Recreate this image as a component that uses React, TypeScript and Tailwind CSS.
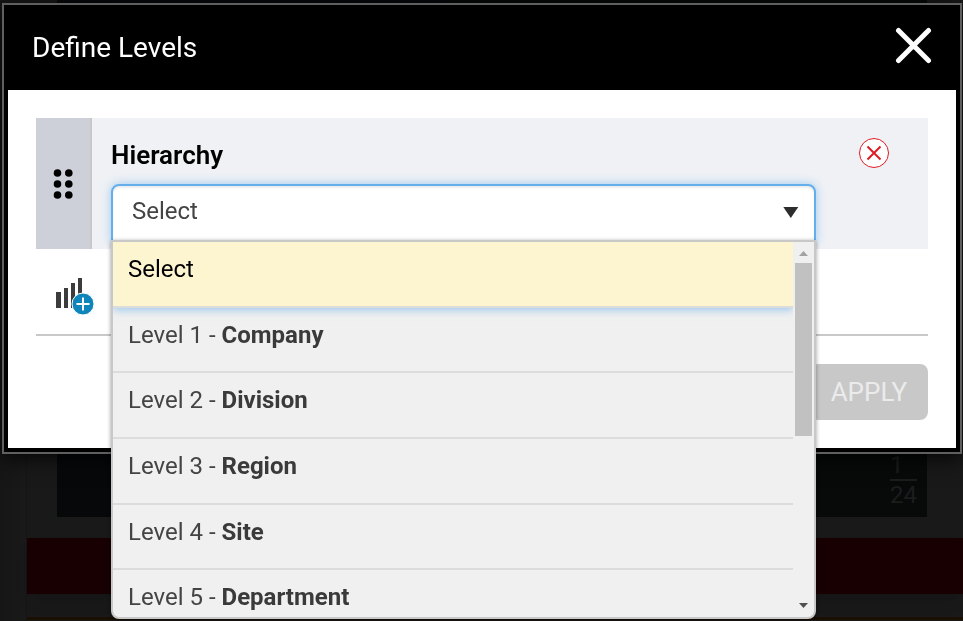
import React, { useState } from 'react';

const LEVELS = [
  { id: '1', name: 'Company' },
  { id: '2', name: 'Division' },
  { id: '3', name: 'Region' },
  { id: '4', name: 'Site' },
  { id: '5', name: 'Department' },
];

// Dimmed page that sits behind the dialog
function PageBehind() {
  return (
    <div aria-hidden="true" className="fixed inset-0 flex overflow-hidden bg-[#191919]">
      <div className="w-[27px] shrink-0 border-r border-[#151515] bg-linear-to-r from-[#161616] to-[#191919]" />
      <div className="flex min-w-0 flex-1 flex-col">
        <div className="mr-9 ml-[30px] flex h-[517px] shrink-0 flex-col items-end justify-end bg-linear-to-r from-[#06080a] to-[#070a09] pr-2.5 pb-2 text-2xl leading-7 text-[#1b1d1d]">
          <span className="w-[27px] border-b-2 border-[#1b1d1d]">1</span>
          <span className="w-[27px]">24</span>
        </div>
        <div className="mt-[21px] h-14 shrink-0 bg-[#180002] shadow-lg" />
        <div className="mt-[23px] h-[3px] bg-[#1a0f00]" />
      </div>
    </div>
  );
}

function DragHandle() {
  return (
    <button type="button" aria-label="Reorder level" className="flex w-14 shrink-0 items-center justify-center border-r-2 border-[#c8c8c8] bg-[#cdd0d9]">
      <svg width="20" height="32" viewBox="0 0 20 32" fill="#000">
        {[5, 16, 27].map((y) => (
          <React.Fragment key={y}>
            <circle cx="4.5" cy={y} r="3.8" />
            <circle cx="15.8" cy={y} r="3.8" />
          </React.Fragment>
        ))}
      </svg>
    </button>
  );
}

function AddLevelIcon() {
  return (
    <svg width="40" height="40" viewBox="0 0 40 40">
      <g fill="#3c3c3c">
        <rect x="0" y="15" width="5" height="16" />
        <rect x="8" y="11" width="4" height="20" />
        <rect x="15" y="6" width="4" height="25" />
        <rect x="22" y="1" width="4" height="30" />
      </g>
      <circle cx="27" cy="27" r="11" fill="#0e86bb" stroke="#fff" strokeWidth="1" />
      <path d="M27 20.5v13M20.5 27h13" stroke="#fff" strokeWidth="2" fill="none" />
    </svg>
  );
}

type MenuProps = {
  value: string;
  onPick: (value: string) => void;
};

function LevelMenu({ value, onPick }: MenuProps) {
  const row = 'cursor-pointer border-b-2 border-[#dcdcdc] px-[15px] pt-[9px]';
  const active = 'relative bg-[#fdf4d0] text-black shadow-[0_2px_8px_rgba(100,175,235,0.6)]';

  return (
    <div className="absolute inset-x-0 top-14 z-10 flex h-[379px] overflow-hidden rounded-b-lg border-2 border-[#c8c8c8] bg-[#f0f0f0] shadow-[0_1px_4px_rgba(0,0,0,0.4)]">
      <ul role="listbox" aria-label="Hierarchy levels" className="grid h-[394px] flex-1 grid-rows-6 overflow-hidden text-2xl leading-9 text-[#444]">
        <li role="option" aria-selected={value === ''} onClick={() => onPick('')} className={`${row} ${value === '' ? active : ''}`}>
          Select
        </li>
        {LEVELS.map((level) => (
          <li
            key={level.id}
            role="option"
            aria-selected={value === level.id}
            onClick={() => onPick(level.id)}
            className={`${row} ${value === level.id ? active : ''}`}
          >
            Level {level.id} - <b className="font-bold text-[#3a3a3a]">{level.name}</b>
          </li>
        ))}
      </ul>
      {/* Scroll bar */}
      <div aria-hidden="true" className="flex w-[21px] flex-col items-center pt-[9px] pb-[9px]">
        <svg width="9" height="5" viewBox="0 0 9 5" fill="#a3a3a3"><path d="M0 5 4.5 0 9 5z" /></svg>
        <div className="mt-[7px] h-[173px] w-[17px] bg-[#c1c1c1]" />
        <svg className="mt-auto" width="9" height="5" viewBox="0 0 9 5" fill="#505050"><path d="M0 0h9L4.5 5z" /></svg>
      </div>
    </div>
  );
}

function App() {
  const [level, setLevel] = useState('');
  const [open, setOpen] = useState(true);

  const pick = (value: string) => {
    setLevel(value);
    setOpen(false);
  };

  return (
    <div className="min-h-screen overflow-hidden font-['Roboto',sans-serif]">
      <PageBehind />

      <div role="dialog" aria-labelledby="dialog-title" className="relative mt-[3px] mr-px ml-0.5 border-2 border-[#5f5f5f] bg-black shadow-[0_4px_20px_rgba(0,0,0,0.8)]">
        <header className="flex h-[85px] items-center justify-between px-7">
          <h1 id="dialog-title" className="text-[28px] leading-9 text-white">Define Levels</h1>
          <button type="button" aria-label="Close" className="pb-1">
            <svg width="38" height="38" viewBox="0 0 38 38" fill="none" stroke="#fff" strokeWidth="5" strokeLinecap="round">
              <path d="M4.5 3.5 34.5 33.5M34.5 3.5 4.5 33.5" />
            </svg>
          </button>
        </header>

        <div className="mx-1 mb-1 bg-white p-7">
          <div className="flex h-[131px] bg-[#eff1f5]">
            <DragHandle />
            <div className="flex flex-1 items-start pr-[39px] pl-[19px]">
              <div className="flex-1 pt-[19px]">
                <label htmlFor="hierarchy" className="block pb-[11px] text-[26px] leading-9 font-semibold text-black">Hierarchy</label>
                <div className="relative">
                  <select
                    id="hierarchy"
                    value={level}
                    onChange={(e) => setLevel(e.target.value)}
                    onMouseDown={(e) => {
                      e.preventDefault();
                      setOpen(!open);
                    }}
                    className={`block h-[58px] w-full appearance-none border-2 border-[#64afeb] bg-white px-[19px] pb-1 text-2xl text-[#444] shadow-[0_0_10px_rgba(100,175,235,0.6),inset_0_2px_2px_rgba(0,0,0,0.08)] outline-none ${open ? 'rounded-t-lg' : 'rounded-lg'}`}
                  >
                    <option value="">Select</option>
                    {LEVELS.map((l) => (
                      <option key={l.id} value={l.id}>Level {l.id} - {l.name}</option>
                    ))}
                  </select>
                  <svg className="pointer-events-none absolute top-[23px] right-[17px]" width="16" height="11" viewBox="0 0 16 11" fill="#2d2d2d">
                    <path d="M.3 0h15L7.8 11z" />
                  </svg>
                  {open && <LevelMenu value={level} onPick={pick} />}
                </div>
              </div>
              <button type="button" aria-label="Remove level" className="mt-5 ml-[43px]">
                <svg width="30" height="30" viewBox="0 0 30 30" fill="none" stroke="#e01b24">
                  <circle cx="15" cy="15" r="14.5" fill="#fff" />
                  <path d="M8.5 8.5l13 13M21.5 8.5l-13 13" strokeWidth="2" />
                </svg>
              </button>
            </div>
          </div>

          <div className="border-b-2 border-[#c8c8c8] px-5 pt-7 pb-[17px]">
            <button type="button" aria-label="Add level" className="block">
              <AddLevelIcon />
            </button>
          </div>

          <div className="flex justify-end pt-7">
            <button type="button" disabled className="h-14 rounded-lg bg-[#c8c8c8] px-[21px] text-[26px] text-[#ebebeb]">APPLY</button>
          </div>
        </div>
      </div>
    </div>
  );
}

export default App;
